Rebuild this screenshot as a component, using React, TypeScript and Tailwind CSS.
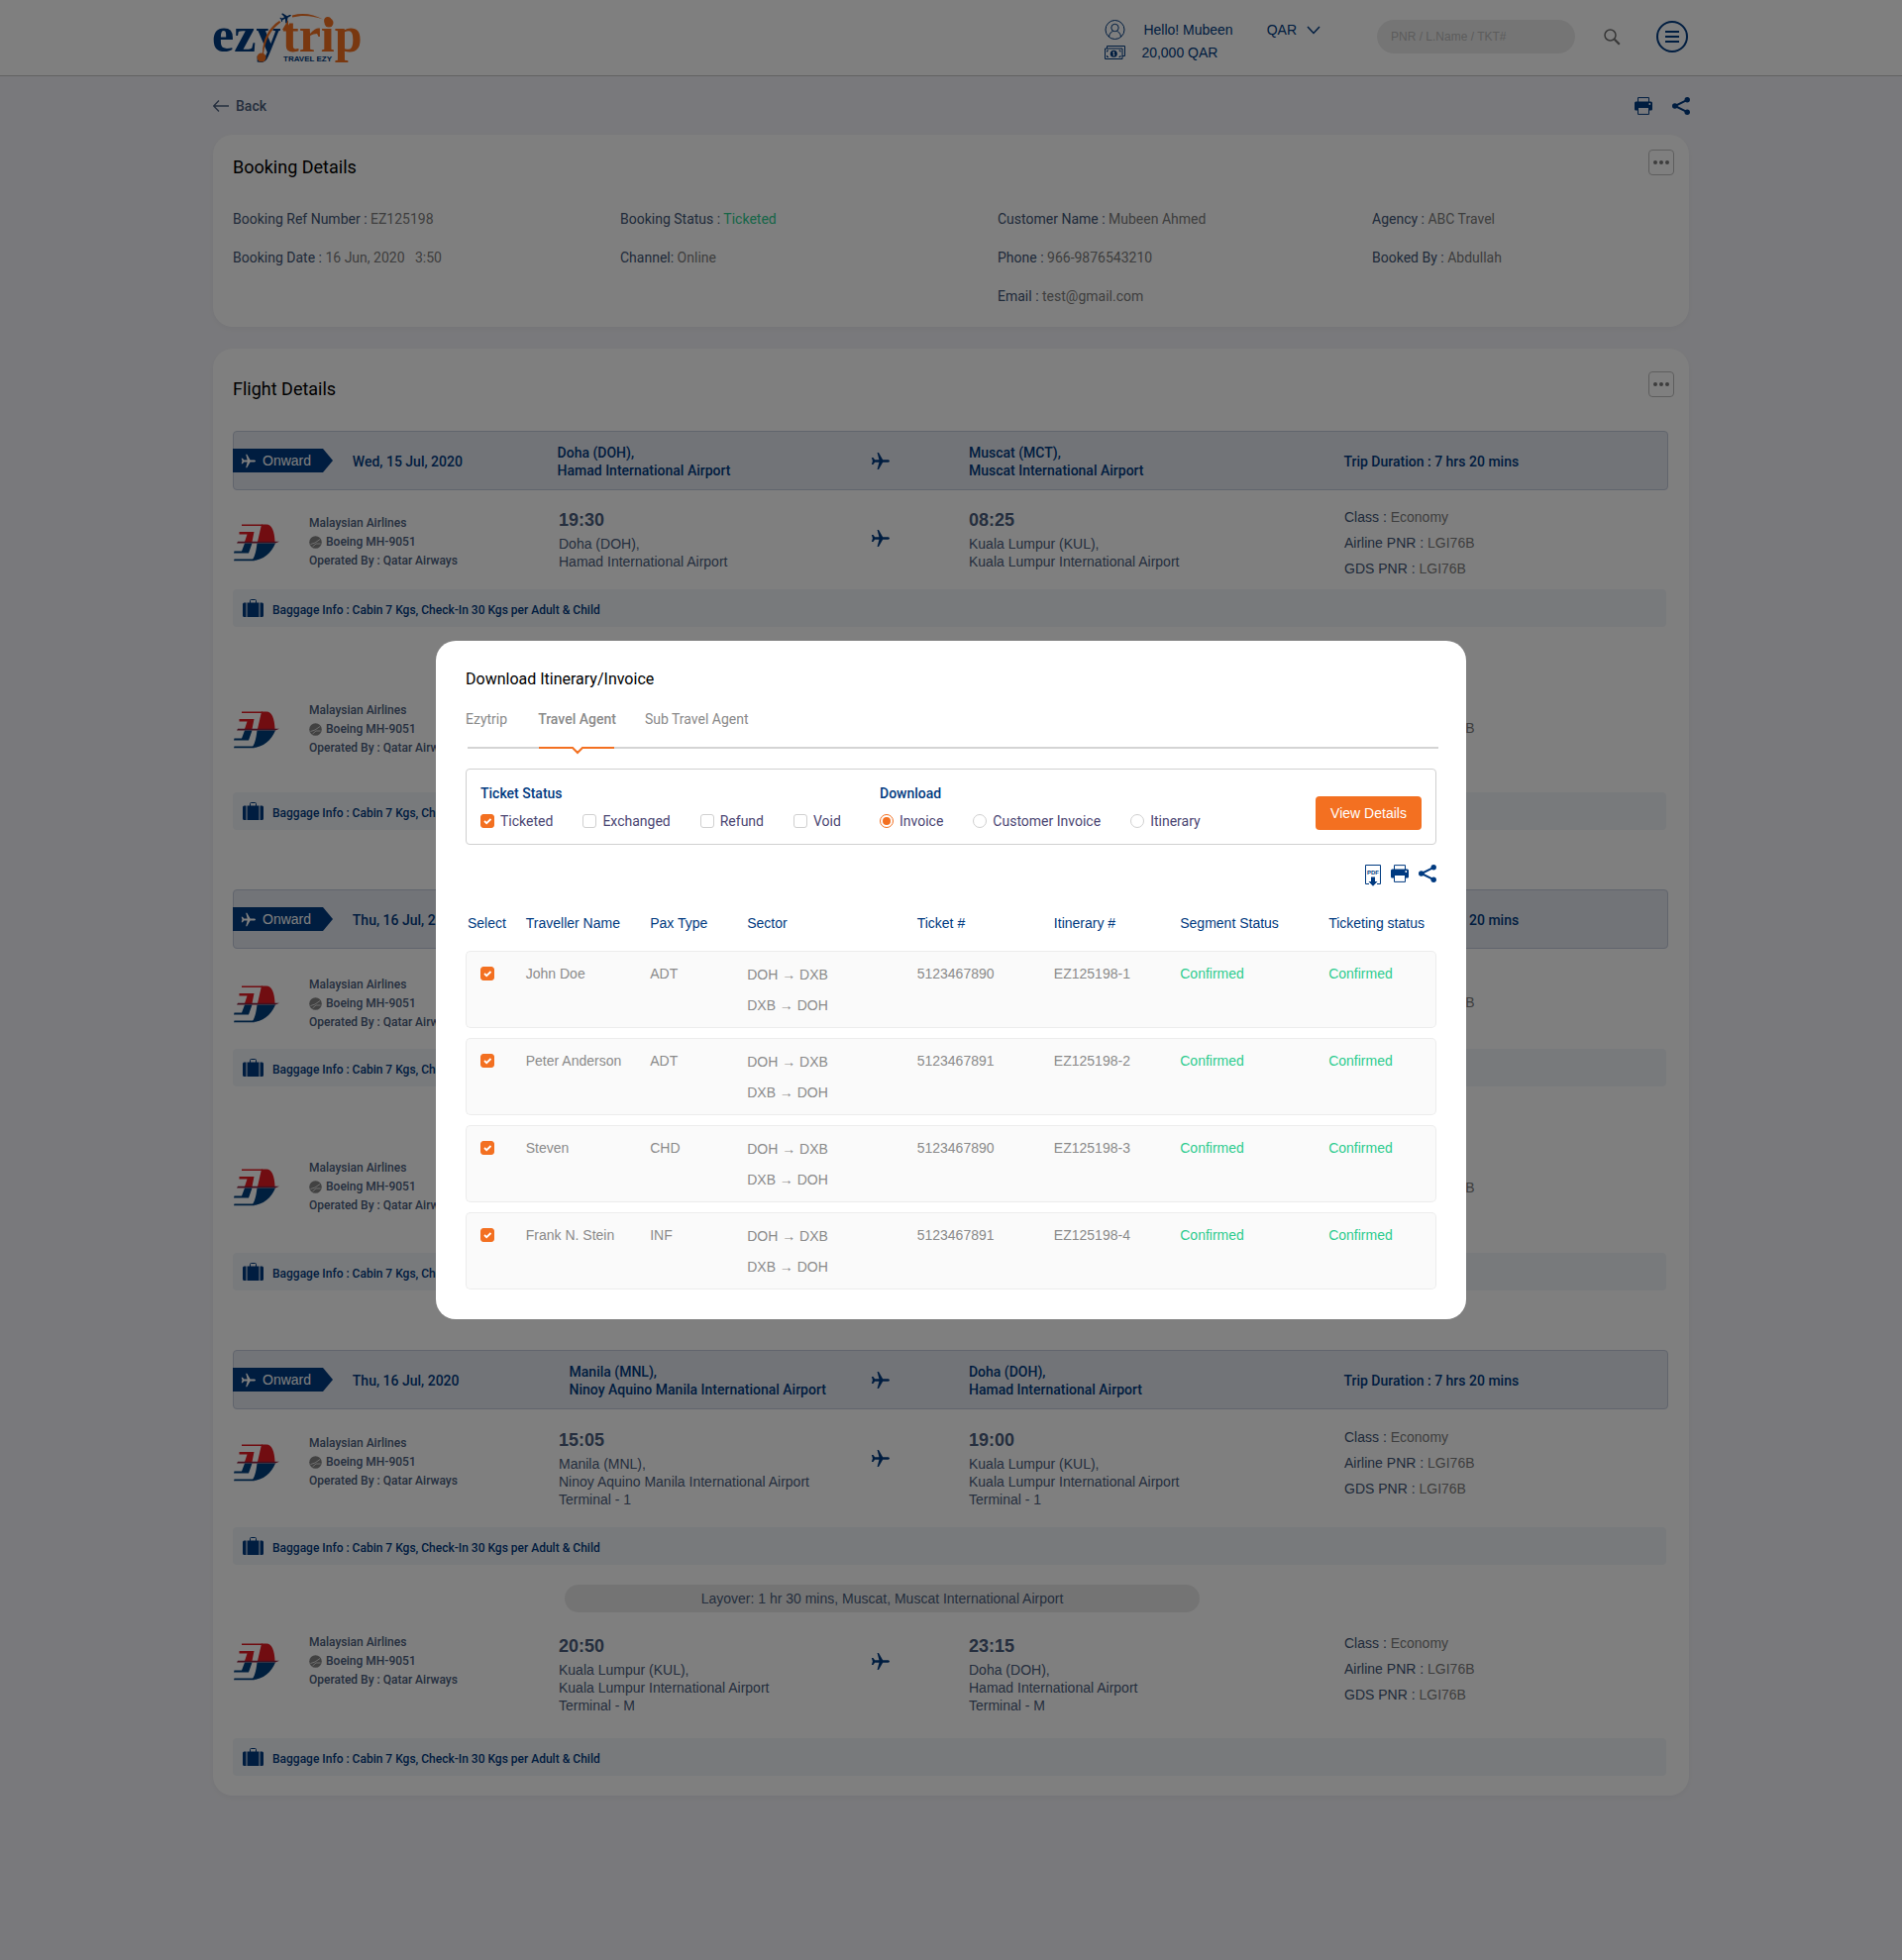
import React, { useState } from "react";

const SANS = "font-['Liberation_Sans',Arial,sans-serif]";

type Stop = { time: string; lines: string[] };

type Leg = {
  from: Stop;
  to: Stop;
  pad: string;
  airlinePad?: string;
  planePad?: string;
};

const BAND_COLS =
  "grid grid-cols-[minmax(0,120fr)_minmax(0,207fr)_minmax(0,317fr)_minmax(0,99fr)_minmax(0,379fr)_minmax(0,327fr)]";
const LEG_COLS =
  "grid grid-cols-[minmax(0,77fr)_minmax(0,252fr)_minmax(0,315fr)_minmax(0,99fr)_minmax(0,379fr)_minmax(0,327fr)]";

function Plane({ className }: { className: string }) {
  return (
    <svg viewBox="0 0 20 20" fill="currentColor" className={className} aria-hidden="true">
      <path d="M20 10c0 .9-1.2 1.4-2.500 1.400H12.800L8.400 19H6.900l2-7.600H4.300L2.600 13.800H.9L2 10 .9 6.200h1.700l1.700 2.400h4.600L6.900 1h1.500l4.400 7.600h4.700c1.300 0 2.500.5 2.500 1.400Z" />
    </svg>
  );
}

function PrintIcon() {
  return (
    <svg width="18" height="18" viewBox="0 0 18 18" fill="none" aria-hidden="true">
      <path d="M3.500 5V.600h11V5" stroke="#003a80" />
      <path
        d="M1.500 4.500h15A1.500 1.500 0 0 1 18 6v6.200a1.300 1.300 0 0 1-1.300 1.300H15V11H3v2.500H1.300A1.300 1.300 0 0 1 0 12.200V6a1.500 1.500 0 0 1 1.500-1.500Z"
        fill="#003a80"
      />
      <circle cx="15.300" cy="7" r=".9" fill="#fff" />
      <path d="M3.500 11v6.400h11V11" stroke="#003a80" />
    </svg>
  );
}

function ShareIcon() {
  return (
    <svg width="18" height="18" viewBox="0 0 18 18" fill="none" aria-hidden="true">
      <path d="M15.200 2.800 2.800 9l12.400 6.200" stroke="#003a80" strokeWidth="2" />
      <circle cx="15.200" cy="2.800" r="2.700" fill="#003a80" />
      <circle cx="2.800" cy="9" r="2.800" fill="#003a80" />
      <circle cx="15.200" cy="15.200" r="2.700" fill="#003a80" />
    </svg>
  );
}

function PdfIcon() {
  return (
    <svg width="16" height="22" viewBox="0 0 16 22" fill="none" aria-hidden="true">
      <path d="M4 19.500H.500V.500h15v19H12" stroke="#003a80" />
      <text
        x="8"
        y="10"
        textAnchor="middle"
        fontSize="6"
        fontWeight="700"
        fill="#003a80"
        fontFamily="Liberation Sans, Arial, sans-serif"
      >
        PDF
      </text>
      <path d="M6 12.500h4V17h2.500L8 21.800 3.500 17H6Z" fill="#003a80" />
    </svg>
  );
}

function Logo() {
  return (
    <svg width="154" height="64" viewBox="-1 -6 154 64" aria-label="ezytrip Travel Ezy" role="img">
      <g fontFamily="Liberation Serif, Times New Roman, serif" fontWeight="700" fontSize="50">
        <text x="-1" y="40" fill="#003a80">
          ezy
        </text>
        <text x="70" y="40" fill="#f37021">
          trip
        </text>
      </g>
      <circle cx="49" cy="46" r="4.500" fill="#f37021" />
      <circle cx="117" cy="11" r="4.500" fill="#f37021" />
      <path d="M76 18V8l-6 10Z" fill="#f37021" />
      <path d="M50 42c0-14 6-26 17-33l1.500 1.500C58 18 53 28 51 42Z" fill="#f37021" />
      <path d="M80 3.500c11-3 22-1 31 4-10-3.500-20-5-31-2Z" fill="#f37021" />
      <g transform="translate(66 -1) rotate(-24 7 7) scale(.027)" fill="#003a80">
        <path d="M186 450h44c5 0 11-4 15-9l105-155 97 1c18 0 49-13 49-31s-31-31-49-31l-97 1L245 71c-4-5-10-9-15-9h-44l58 160-105 3-39-50H64l24 81-24 81h36l39-50 105 3Z" />
      </g>
      <text
        x="71"
        y="50"
        fontSize="8"
        fontWeight="700"
        fill="#003a80"
        fontFamily="Liberation Sans, Arial, sans-serif"
      >
        TRAVEL EZY
      </text>
    </svg>
  );
}

function AirlineLogo() {
  return (
    <svg width="46" height="38" viewBox="0 0 46 38" aria-label="Malaysian Airlines" role="img">
      <path d="M28 .500h5c5.500 0 8 6.500 8.500 17.500H24Z" fill="#e31b23" />
      <path d="M8 .500h21l-.5 1.500H8Z" fill="#e31b23" />
      <path d="M5.500 8H20.500L18.500 18H11l2.500-7.500H5.500Z" fill="#e31b23" />
      <path d="M4 17.800h42l-4 1.700H3Z" fill="#8a1f3c" />
      <path d="M23.500 19.500H42C38 29 30 37 18 37c3-3 4.500-9 5.500-17.500Z" fill="#003f7d" />
      <path d="M11 19.500h7.500L15 29.500H0l.500-2H8Z" fill="#003f7d" />
      <path d="M0 37.200.500 35.500H19l2 1.700Z" fill="#003f7d" />
    </svg>
  );
}

function SuitcaseIcon() {
  return (
    <svg width="21" height="18" viewBox="0 0 21 18" fill="#003a80" aria-hidden="true">
      <path d="M7.500 4V1.500A1 1 0 0 1 8.500.500h4a1 1 0 0 1 1 1V4" fill="none" stroke="#003a80" />
      <path d="M1.500 3.500H3.500V18h-2A1.500 1.500 0 0 1 0 16.500V5a1.500 1.500 0 0 1 1.500-1.500ZM4.500 3.500h12V18h-12ZM17.500 3.500h2A1.500 1.500 0 0 1 21 5v11.500a1.500 1.500 0 0 1-1.500 1.500h-2Z" />
    </svg>
  );
}

function TurbineIcon() {
  return (
    <svg width="13" height="13" viewBox="0 0 13 13" aria-hidden="true" className="shrink-0">
      <circle cx="6.500" cy="6.500" r="6.300" fill="#858585" />
      <path d="M1.500 8.500 6 7l5-3.500M3.500 11l3.500-3h4.500" stroke="#dcdcdc" fill="none" />
    </svg>
  );
}

function Pair({ label, value, tone = "text-[#7d7d7d]" }: { label: string; value: string; tone?: string }) {
  return (
    <p className="whitespace-pre">
      <span className="text-[#3f5475]">{label}</span> <span className={tone}>{value}</span>
    </p>
  );
}

function MoreButton() {
  return (
    <button
      type="button"
      aria-label="More options"
      className="flex size-[26px] items-center justify-center gap-[2px] rounded border border-[#bdbdbd]"
    >
      <span className="size-1 rounded-full bg-[#7a7a7a]" />
      <span className="size-1 rounded-full bg-[#7a7a7a]" />
      <span className="size-1 rounded-full bg-[#7a7a7a]" />
    </button>
  );
}

function Header() {
  return (
    <header className="border-b border-[#c4c4c4] bg-white">
      <div className="mx-auto flex h-[76px] w-full max-w-[1490px] items-start justify-between">
        <a href="#home" className="-ml-px mt-[6px]">
          <Logo />
        </a>
        <div className={`flex items-start text-sm text-[#003a80] ${SANS}`}>
          <div className="mt-5 grid grid-cols-[21px_auto] items-center gap-x-4 gap-y-[3px]">
            <svg width="21" height="20" viewBox="0 0 21 20" fill="none" stroke="#003a80" aria-hidden="true">
              <circle cx="10.500" cy="10" r="9.500" />
              <circle cx="10.500" cy="8" r="3.700" />
              <path d="M4.500 17c.5-3.500 2.500-5.300 4-5.300M16.500 17c-.5-3.500-2.500-5.300-4-5.300" />
            </svg>
            <span className="pl-[2px] leading-5">Hello! Mubeen</span>
            <svg width="21" height="14" viewBox="0 0 21 14" fill="none" stroke="#003a80" aria-hidden="true">
              <path d="M2.500 3V.5h18v10H18" />
              <path d="M.5 3h17.500v10.500H.5Z" />
              <path d="M2.500 6.500v-1.500h1.500M16 6.500v-1.500h-1.500M2.500 10v1.500h1.500M16 10v1.500h-1.500" />
              <circle cx="9.300" cy="8.200" r="3.500" fill="#003a80" stroke="none" />
              <path d="M9.300 6v4.500M8.300 7h1.500M8.800 9.500h1.500" stroke="#fff" />
            </svg>
            <span className="leading-5">20,000 QAR</span>
          </div>
          <button type="button" className="ml-[34px] mt-5 flex items-center gap-[10px] leading-5">
            QAR
            <svg width="14" height="9" viewBox="0 0 14 9" fill="none" stroke="#003a80" strokeWidth="1.500" aria-hidden="true">
              <path d="m1 1 6 6.500L13 1" />
            </svg>
          </button>
          <input
            type="search"
            aria-label="Search bookings"
            placeholder="PNR / L.Name / TKT#"
            className="ml-[57px] mt-5 h-[34px] w-[200px] rounded-full bg-[#ebebeb] px-[14px] text-xs placeholder:text-[#b9b9b9]"
          />
          <button type="button" aria-label="Search" className="ml-[29px] mt-[29px]">
            <svg width="17" height="17" viewBox="0 0 17 17" fill="none" stroke="#6f6f6f" aria-hidden="true">
              <circle cx="6.500" cy="6.500" r="5.500" strokeWidth="1.500" />
              <path d="m10.800 10.800 5 5" strokeWidth="2.200" />
            </svg>
          </button>
          <button
            type="button"
            aria-label="Menu"
            className="ml-9 mr-px mt-[21px] flex size-8 flex-col items-center justify-center gap-[3px] rounded-full border-2 border-[#003a80]"
          >
            <span className="h-[2px] w-[14px] bg-[#003a80]" />
            <span className="h-[2px] w-[14px] bg-[#003a80]" />
            <span className="h-[2px] w-[14px] bg-[#003a80]" />
          </button>
        </div>
      </div>
    </header>
  );
}

function BookingDetails() {
  return (
    <section className="rounded-[20px] bg-white pb-[11px] pl-5 pr-[15px] pt-[15px] shadow-[0_2px_6px_rgba(0,0,0,0.04)]">
      <div className="flex items-start justify-between">
        <h2 className="pt-1 text-lg leading-7 text-black">Booking Details</h2>
        <MoreButton />
      </div>
      <div className="mt-[19px] grid grid-cols-[minmax(0,391fr)_minmax(0,381fr)_minmax(0,378fr)_minmax(0,305fr)] text-sm leading-[39px]">
        <div>
          <Pair label="Booking Ref Number :" value="EZ125198" />
          <Pair label="Booking Date :" value="16 Jun, 2020   3:50" />
        </div>
        <div>
          <Pair label="Booking Status :" value="Ticketed" tone="text-[#2dcc8f]" />
          <Pair label="Channel:" value="Online" />
        </div>
        <div>
          <Pair label="Customer Name :" value="Mubeen Ahmed" />
          <Pair label="Phone :" value="966-9876543210" />
          <Pair label="Email :" value="test@gmail.com" />
        </div>
        <div>
          <Pair label="Agency :" value="ABC Travel" />
          <Pair label="Booked By :" value="Abdullah" />
        </div>
      </div>
    </section>
  );
}

function Band({ date, from, to, indent = "" }: { date: string; from: string[]; to: string[]; indent?: string }) {
  return (
    <div
      className={`${BAND_COLS} h-[60px] items-center rounded border border-[#c3cadb] bg-[#e4e8f0] text-sm font-medium leading-[18px] text-[#003a80]`}
    >
      <div
        className={`-ml-px flex h-6 w-[101px] items-center gap-[7px] bg-[#003a80] pl-2 font-normal text-white [clip-path:polygon(0_0,91px_0,100%_50%,91px_100%,0_100%)] ${SANS}`}
      >
        <Plane className="size-[15px]" />
        Onward
      </div>
      <p className="pt-[2px]">{date}</p>
      <p className={`pt-[2px] ${indent}`}>
        {from[0]}
        <br />
        {from[1]}
      </p>
      <Plane className="size-[19px]" />
      <p className="pt-[2px]">
        {to[0]}
        <br />
        {to[1]}
      </p>
      <p className="pt-[2px]">Trip Duration : 7 hrs 20 mins</p>
    </div>
  );
}

function StopBlock({ stop }: { stop: Stop }) {
  return (
    <div className={`pt-1 text-sm leading-[18px] text-[#4a5d7c] ${SANS}`}>
      <p className="mb-[3px] text-lg font-bold leading-6">{stop.time}</p>
      {stop.lines.map((line) => (
        <p key={line}>{line}</p>
      ))}
    </div>
  );
}

function LegRow({ from, to, pad, airlinePad = "pt-[10px]", planePad = "pt-[25px]" }: Leg) {
  return (
    <div className={`${LEG_COLS} ${pad}`}>
      <div className={`pl-px ${airlinePad}`}>
        <div className="flex h-[57px] items-center">
          <AirlineLogo />
        </div>
      </div>
      <div className={`${airlinePad} text-xs font-medium leading-[19px] text-[#4a5d7c]`}>
        <p className="leading-[19px]">Malaysian Airlines</p>
        <p className="flex items-center gap-1 leading-[19px]">
          <TurbineIcon />
          Boeing MH-9051
        </p>
        <p className="leading-[19px]">Operated By : Qatar Airways</p>
      </div>
      <StopBlock stop={from} />
      <div className={planePad}>
        <Plane className="size-[19px] text-[#003a80]" />
      </div>
      <StopBlock stop={to} />
      <div className={`text-sm leading-[26px] ${SANS}`}>
        <Pair label="Class :" value="Economy" />
        <Pair label="Airline PNR :" value="LGI76B" />
        <Pair label="GDS PNR :" value="LGI76B" />
      </div>
    </div>
  );
}

function Baggage() {
  return (
    <div className="mr-[2px] flex h-[38px] items-center gap-[9px] rounded bg-[#f1f4f8] pl-[10px] text-xs font-medium text-[#003a80]">
      <SuitcaseIcon />
      <span className="pt-1">Baggage Info : Cabin 7 Kgs, Check-In 30 Kgs per Adult &amp; Child</span>
    </div>
  );
}

function Layover() {
  return (
    <div className="mt-5 flex justify-center">
      <p
        className={`mr-[138px] h-7 w-[641px] rounded-full bg-[#e9e9e9] text-center text-sm leading-7 text-[#4a5d7c] ${SANS}`}
      >
        Layover: 1 hr 30 mins, Muscat, Muscat International Airport
      </p>
    </div>
  );
}

const DOHA = ["Doha (DOH),", "Hamad International Airport"];
const KUL = ["Kuala Lumpur (KUL),", "Kuala Lumpur International Airport"];
const MUSCAT = ["Muscat (MCT),", "Muscat International Airport"];
const MANILA = ["Manila (MNL),", "Ninoy Aquino Manila International Airport"];

function FlightDetails() {
  return (
    <section className="mt-[22px] rounded-[20px] bg-white pb-5 pl-5 pr-[15px] pt-[23px] shadow-[0_2px_6px_rgba(0,0,0,0.04)]">
      <div className="flex items-start justify-between">
        <h2 className="pt-1 text-lg leading-7 text-black">Flight Details</h2>
        <MoreButton />
      </div>
      <div className="mr-[6px] pt-7">
        <Band date="Wed, 15 Jul, 2020" from={DOHA} to={MUSCAT} />
        <LegRow from={{ time: "19:30", lines: DOHA }} to={{ time: "08:25", lines: KUL }} pad="pb-2 pt-[14px]" />
        <Baggage />
        <Layover />
        <LegRow from={{ time: "10:15", lines: KUL }} to={{ time: "14:05", lines: MUSCAT }} pad="pb-[26px] pt-[15px]" airlinePad="pt-3" />
        <Baggage />

        <div className="pt-[60px]">
          <Band date="Thu, 16 Jul, 2020" from={MUSCAT} to={MANILA} />
        </div>
        <LegRow
          from={{ time: "15:05", lines: MUSCAT }}
          to={{ time: "19:00", lines: KUL }}
          pad="pb-2 pt-[15px]"
          airlinePad="pt-3"
        />
        <Baggage />
        <Layover />
        <LegRow from={{ time: "20:50", lines: KUL }} to={{ time: "23:15", lines: MANILA }} pad="pb-[27px] pt-[15px]" />
        <Baggage />

        <div className="pt-[60px]">
          <Band date="Thu, 16 Jul, 2020" from={MANILA} to={DOHA} indent="pl-3" />
        </div>
        <LegRow
          from={{ time: "15:05", lines: [...MANILA, "Terminal - 1"] }}
          to={{ time: "19:00", lines: [...KUL, "Terminal - 1"] }}
          pad="pb-[19px] pt-[15px]"
        />
        <Baggage />
        <Layover />
        <LegRow
          from={{ time: "20:50", lines: [...KUL, "Terminal - M"] }}
          to={{ time: "23:15", lines: [...DOHA, "Terminal - M"] }}
          pad="pb-6 pt-[18px]"
          airlinePad="pt-[3px]"
          planePad="pt-[22px]"
        />
        <Baggage />
      </div>
    </section>
  );
}

const CHECK =
  "size-[14px] shrink-0 appearance-none rounded-[3px] border border-[#d0d0d0] bg-white checked:border-[#f37021] checked:bg-[#f37021]";

function CheckBox({
  checked,
  onChange,
  id,
  label,
}: {
  checked: boolean;
  onChange: () => void;
  id: string;
  label?: string;
}) {
  return (
    <span className="relative inline-flex size-[14px] shrink-0">
      <input id={id} type="checkbox" aria-label={label} checked={checked} onChange={onChange} className={CHECK} />
      {checked && (
        <svg
          viewBox="0 0 14 14"
          className="pointer-events-none absolute inset-0 size-[14px]"
          fill="none"
          stroke="#fff"
          strokeWidth="1.800"
          aria-hidden="true"
        >
          <path d="m4 7 2.200 2.200L10.500 5" />
        </svg>
      )}
    </span>
  );
}

const TRAVELLERS = [
  { name: "John Doe", pax: "ADT", ticket: "5123467890", itinerary: "EZ125198-1" },
  { name: "Peter Anderson", pax: "ADT", ticket: "5123467891", itinerary: "EZ125198-2" },
  { name: "Steven", pax: "CHD", ticket: "5123467890", itinerary: "EZ125198-3" },
  { name: "Frank N. Stein", pax: "INF", ticket: "5123467891", itinerary: "EZ125198-4" },
];

const HEADINGS = [
  "Select",
  "Traveller Name",
  "Pax Type",
  "Sector",
  "Ticket #",
  "Itinerary #",
  "Segment Status",
  "Ticketing status",
];

const CELL = "border-y border-[#ececec] bg-[#fafafa] pt-3 align-top";

function TravellerTable() {
  const [picked, setPicked] = useState([true, true, true, true]);
  const toggle = (i: number) => setPicked(picked.map((p, j) => (i === j ? !p : p)));
  return (
    <table
      className={`mt-[17px] w-full table-fixed border-separate border-spacing-x-0 border-spacing-y-[10px] text-left text-sm leading-5 text-[#8a8a8a] ${SANS}`}
    >
      <colgroup>
        <col className="w-[6.2%]" />
        <col className="w-[12.8%]" />
        <col className="w-[10%]" />
        <col className="w-[17.5%]" />
        <col className="w-[14.1%]" />
        <col className="w-[13%]" />
        <col className="w-[15.3%]" />
        <col className="w-[11.1%]" />
      </colgroup>
      <thead className="text-[#003a80]">
        <tr>
          {HEADINGS.map((h) => (
            <th key={h} scope="col" className="whitespace-nowrap pb-2 font-normal first:pl-[2px]">
              {h}
            </th>
          ))}
        </tr>
      </thead>
      <tbody>
        {TRAVELLERS.map((t, i) => (
          <tr key={t.itinerary}>
            <td className={`${CELL} rounded-l-[5px] border-l pl-[14px]`}>
              <span className="flex h-5 items-center">
                <CheckBox
                  id={`traveller-${i}`}
                  label={`Select ${t.name}`}
                  checked={picked[i]}
                  onChange={() => toggle(i)}
                />
              </span>
            </td>
            <td className={CELL}>{t.name}</td>
            <td className={CELL}>{t.pax}</td>
            <td className="border-y border-[#ececec] bg-[#fafafa] pb-[6px] pt-2 align-top leading-[31px]">
              DOH → DXB
              <br />
              DXB → DOH
            </td>
            <td className={CELL}>{t.ticket}</td>
            <td className={CELL}>{t.itinerary}</td>
            <td className={`${CELL} text-[#2dcc8f]`}>Confirmed</td>
            <td className={`${CELL} rounded-r-[5px] border-r text-[#2dcc8f]`}>Confirmed</td>
          </tr>
        ))}
      </tbody>
    </table>
  );
}

function Filters() {
  const [status, setStatus] = useState<Record<string, boolean>>({ Ticketed: true });
  const [kind, setKind] = useState("Invoice");
  return (
    <div className="mt-5 flex h-[77px] items-start rounded border border-[#d0d0d0] px-[14px] pt-[14px] text-sm leading-5 text-[#4b4673]">
      <fieldset className="w-[403px]">
        <legend className="font-medium text-[#003a80]">Ticket Status</legend>
        <div className="mt-2 flex gap-[30px]">
          {["Ticketed", "Exchanged", "Refund", "Void"].map((s) => (
            <label key={s} htmlFor={`status-${s}`} className="flex items-center gap-[6px]">
              <CheckBox
                id={`status-${s}`}
                checked={!!status[s]}
                onChange={() => setStatus({ ...status, [s]: !status[s] })}
              />
              {s}
            </label>
          ))}
        </div>
      </fieldset>
      <fieldset>
        <legend className="font-medium text-[#003a80]">Download</legend>
        <div className="mt-2 flex gap-[30px]">
          {["Invoice", "Customer Invoice", "Itinerary"].map((k) => (
            <label key={k} className="flex items-center gap-[6px]">
              <input
                type="radio"
                name="download-kind"
                checked={kind === k}
                onChange={() => setKind(k)}
                className="size-[14px] appearance-none rounded-full border border-[#d0d0d0] checked:border-[#f37021] checked:bg-[#f37021] checked:bg-clip-content checked:p-[2px]"
              />
              {k}
            </label>
          ))}
        </div>
      </fieldset>
      <button
        type="button"
        className={`ml-auto mt-[13px] h-[34px] w-[107px] rounded bg-[#f37021] text-white ${SANS}`}
      >
        View Details
      </button>
    </div>
  );
}

function DownloadDialog() {
  return (
    <div
      role="dialog"
      aria-modal="true"
      aria-labelledby="download-title"
      className="w-full max-w-[1040px] rounded-[20px] bg-white px-[30px] pb-5 pt-[27px]"
    >
      <h2 id="download-title" className="text-base leading-6 text-black">
        Download Itinerary/Invoice
      </h2>
      <div className="ml-[2px] mr-[-2px] mt-[18px] border-b-2 border-[#d4d4d4]">
        <div role="tablist" className="-ml-[2px] flex text-sm leading-5 text-[#8a8a8a]">
          <button role="tab" type="button" className="pb-[18px]">
            Ezytrip
          </button>
          <button role="tab" type="button" aria-selected="true" className="relative ml-[31px] pb-[18px] font-medium">
            Travel Agent
            <svg
              viewBox="0 0 76 9"
              className="absolute bottom-[-9px] left-px h-[9px] w-[76px]"
              fill="none"
              aria-hidden="true"
            >
              <path d="M34 0h10l-5 5Z" fill="#fff" />
              <path d="M0 1h34l5 5 5-5h32" stroke="#f37021" strokeWidth="2" />
            </svg>
          </button>
          <button role="tab" type="button" className="ml-[29px] pb-[18px]">
            Sub Travel Agent
          </button>
        </div>
      </div>
      <Filters />
      <div className="mt-5 flex h-[22px] items-start justify-end gap-[10px]">
        <button type="button" aria-label="Download PDF">
          <PdfIcon />
        </button>
        <button type="button" aria-label="Print tickets">
          <PrintIcon />
        </button>
        <button type="button" aria-label="Share tickets">
          <ShareIcon />
        </button>
      </div>
      <TravellerTable />
    </div>
  );
}

export default function App() {
  return (
    <div className="min-h-screen bg-[#f3f3f8] font-['Roboto',sans-serif]">
      <Header />
      <main className="mx-auto w-full max-w-[1490px] pb-20">
        <div className="flex h-[59px] items-center justify-between">
          <a href="#back" className="flex items-center gap-[7px] text-sm font-medium text-[#4a5d7c]">
            <svg width="16" height="12" viewBox="0 0 16 12" fill="none" stroke="#4a5d7c" strokeWidth="1.300" aria-hidden="true">
              <path d="M6 .5.700 6 6 11.500M.700 6H16" />
            </svg>
            Back
          </a>
          <div className="-mr-px flex gap-5">
            <button type="button" aria-label="Print">
              <PrintIcon />
            </button>
            <button type="button" aria-label="Share">
              <ShareIcon />
            </button>
          </div>
        </div>
        <BookingDetails />
        <FlightDetails />
      </main>
      <div className="fixed inset-0 flex items-center justify-center bg-black/50">
        <DownloadDialog />
      </div>
    </div>
  );
}
